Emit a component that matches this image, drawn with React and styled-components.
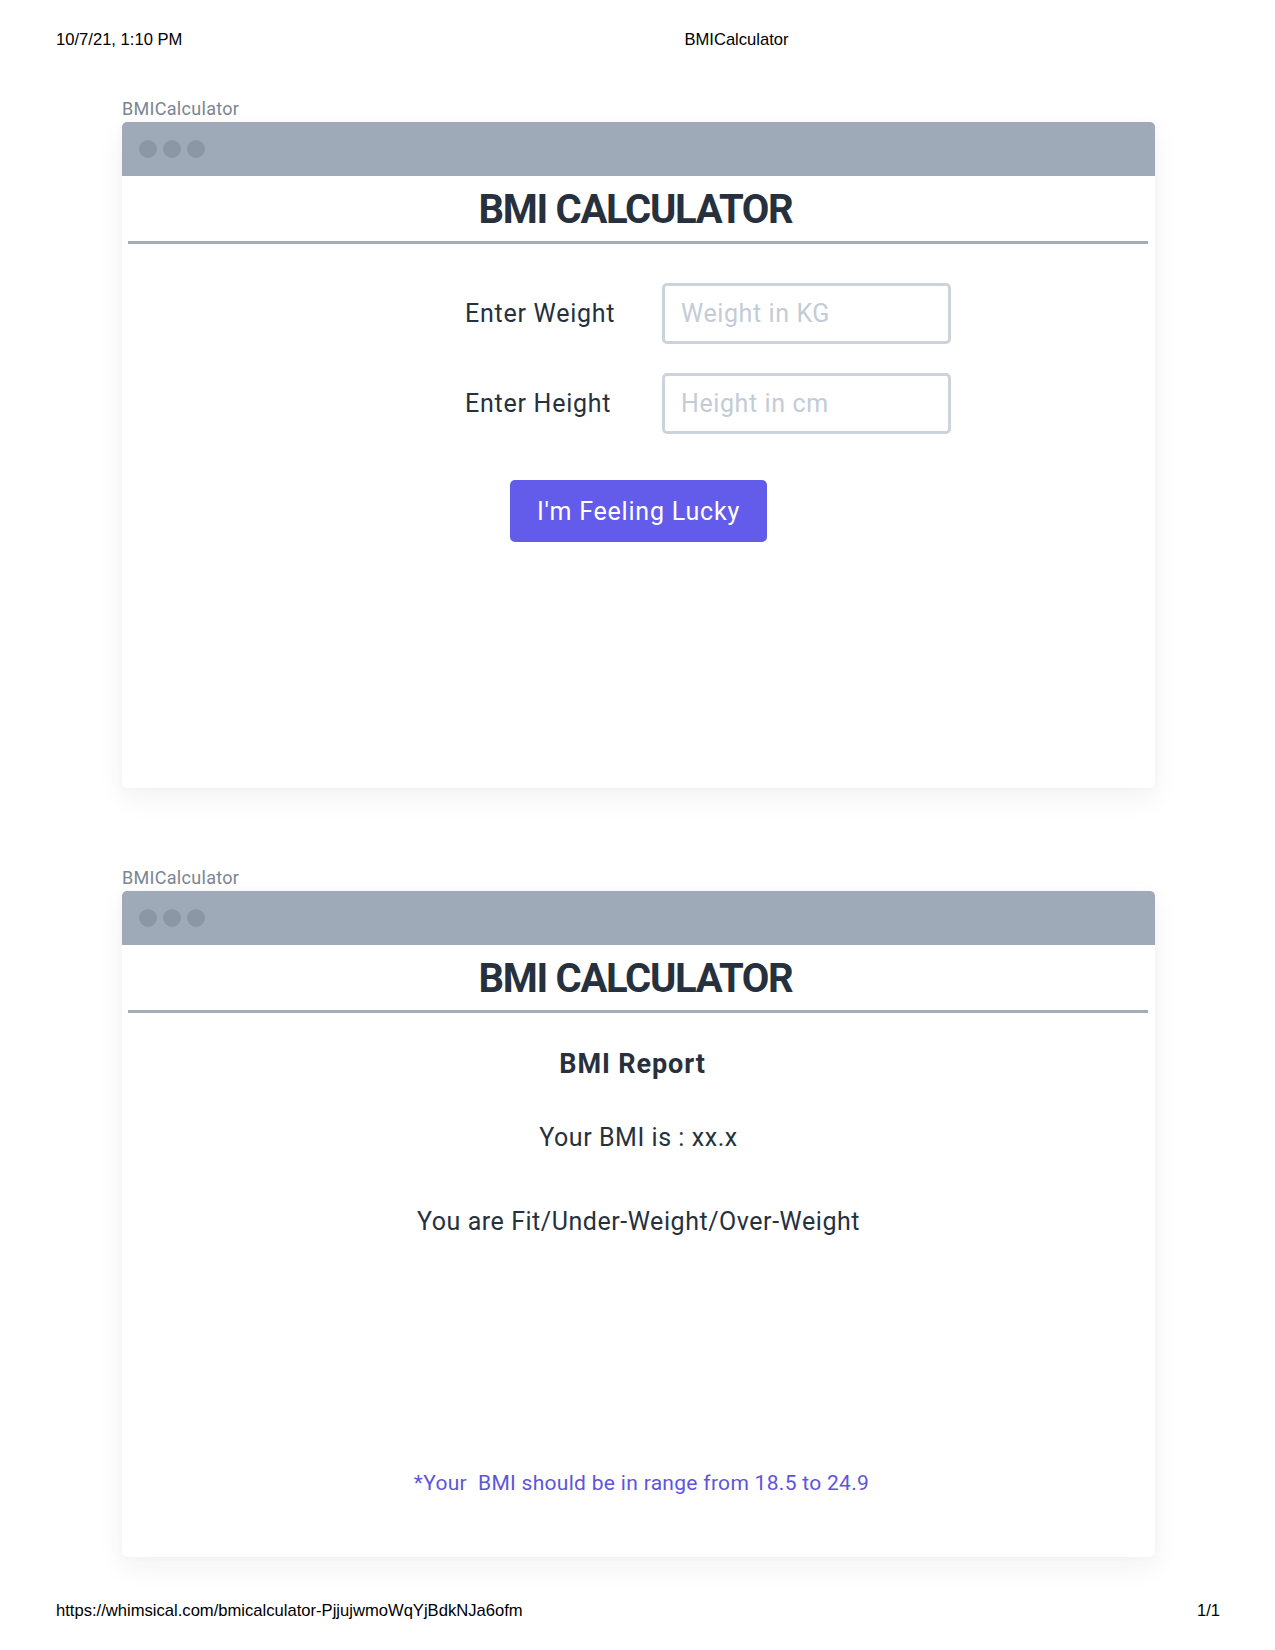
import styled, { createGlobalStyle } from 'styled-components';

const GlobalStyle = createGlobalStyle`
  * {
    box-sizing: border-box;
  }
  body {
    margin: 0;
    background: #ffffff;
    font-family: Roboto, 'Noto Sans', sans-serif;
  }
`;

// 브라우저 인쇄 머리말/꼬리말
const PrintBar = styled.div`
  display: flex;
  align-items: center;
  justify-content: ${({ $spread }) => ($spread ? 'space-between' : 'flex-start')};
  padding: 0 55px 0 56px;
  font-family: 'Liberation Sans', Arial, sans-serif;
  font-size: 16.6px;
  line-height: 18px;
  color: #000000;
`;

const PrintTitle = styled.span`
  margin-left: 502px;
`;

const Page = styled.div`
  width: 1275px;
  min-height: 1650px;
  display: flex;
  flex-direction: column;
  padding: 31px 0 30px;
`;

const Board = styled.main`
  display: flex;
  flex-direction: column;
  gap: 80px;
  padding: 50px 0 0 122px;
  flex: 1;
`;

const Frame = styled.section`
  display: flex;
  flex-direction: column;
  gap: 3px;
  width: 1033px;
`;

const FrameName = styled.div`
  font-size: 18px;
  line-height: 20px;
  letter-spacing: 0.3px;
  color: #7b8692;
`;

const Card = styled.div`
  height: 666px;
  display: flex;
  flex-direction: column;
  background: #ffffff;
  border-radius: 5px;
  box-shadow: 0 10px 28px rgba(30, 40, 60, 0.06), 0 0 6px rgba(30, 40, 60, 0.03);
  overflow: hidden;
`;

const WindowBar = styled.div`
  height: 54px;
  flex-shrink: 0;
  display: flex;
  align-items: center;
  gap: 6px;
  padding-left: 17px;
  background: #9eaab7;
`;

const Dot = styled.span`
  width: 18px;
  height: 18px;
  border-radius: 50%;
  background: #8b97a5;
`;

const Title = styled.h1`
  margin: 14px 0 0 -6px;
  font-size: 40px;
  line-height: 40px;
  font-weight: 700;
  text-align: center;
  color: #26313d;
  letter-spacing: -1.3px;
`;

const Divider = styled.hr`
  margin: 11px 7px 0 6px;
  height: 3px;
  border: none;
  background: #a3adb9;
`;

const Form = styled.div`
  display: grid;
  grid-template-columns: 197px 289px;
  row-gap: 29px;
  align-items: center;
  margin: 39px 0 0 343px;
`;

const Label = styled.label`
  font-size: 25px;
  letter-spacing: 0.75px;
  color: #26313d;
`;

const Field = styled.input`
  width: 289px;
  height: 61px;
  padding: 0 16px;
  border: 3px solid #ccd3da;
  border-radius: 5px;
  font-family: inherit;
  font-size: 25px;
  letter-spacing: 0.6px;
  color: #26313d;
  outline: none;

  &::placeholder {
    color: #c3ccd6;
  }
`;

const LuckyButton = styled.button`
  align-self: center;
  margin-top: 46px;
  width: 257px;
  height: 62px;
  border: none;
  border-radius: 5px;
  background: #635bea;
  color: #ffffff;
  font-family: inherit;
  font-size: 25px;
  letter-spacing: 0.8px;
  cursor: pointer;
`;

const Report = styled.div`
  flex: 1;
  display: flex;
  flex-direction: column;
  align-items: center;
  padding: 35px 0 62px;
`;

const ReportHeading = styled.h2`
  margin: 0 0 0 -12px;
  font-size: 27px;
  font-weight: 700;
  letter-spacing: 0.9px;
  color: #26313d;
`;

const ReportLine = styled.p`
  margin: ${({ $gap }) => $gap}px 0 0;
  font-size: 25px;
  letter-spacing: 0.55px;
  color: #26313d;
`;

const Note = styled.p`
  margin: auto 0 0 6px;
  font-size: 21px;
  letter-spacing: 0.3px;
  color: #5d55db;
  white-space: pre;
`;

const Window = ({ children }) => (
  <Frame>
    <FrameName>BMICalculator</FrameName>
    <Card>
      <WindowBar>
        <Dot />
        <Dot />
        <Dot />
      </WindowBar>
      <Title>BMI CALCULATOR</Title>
      <Divider />
      {children}
    </Card>
  </Frame>
);

const App = () => (
  <>
    <GlobalStyle />
    <Page>
      <PrintBar>
        <span>10/7/21, 1:10 PM</span>
        <PrintTitle>BMICalculator</PrintTitle>
      </PrintBar>

      <Board>
        <Window>
          <Form>
            <Label htmlFor="weight">Enter Weight</Label>
            <Field id="weight" placeholder="Weight in KG" />
            <Label htmlFor="height">Enter Height</Label>
            <Field id="height" placeholder="Height in cm" />
          </Form>
          <LuckyButton>I'm Feeling Lucky</LuckyButton>
        </Window>

        <Window>
          <Report>
            <ReportHeading>BMI Report</ReportHeading>
            <ReportLine $gap={43}>Your BMI is : xx.x</ReportLine>
            <ReportLine $gap={55}>You are Fit/Under-Weight/Over-Weight</ReportLine>
            <Note>*Your  BMI should be in range from 18.5 to 24.9</Note>
          </Report>
        </Window>
      </Board>

      <PrintBar $spread>
        <span>https://whimsical.com/bmicalculator-PjjujwmoWqYjBdkNJa6ofm</span>
        <span>1/1</span>
      </PrintBar>
    </Page>
  </>
);

export default App;
